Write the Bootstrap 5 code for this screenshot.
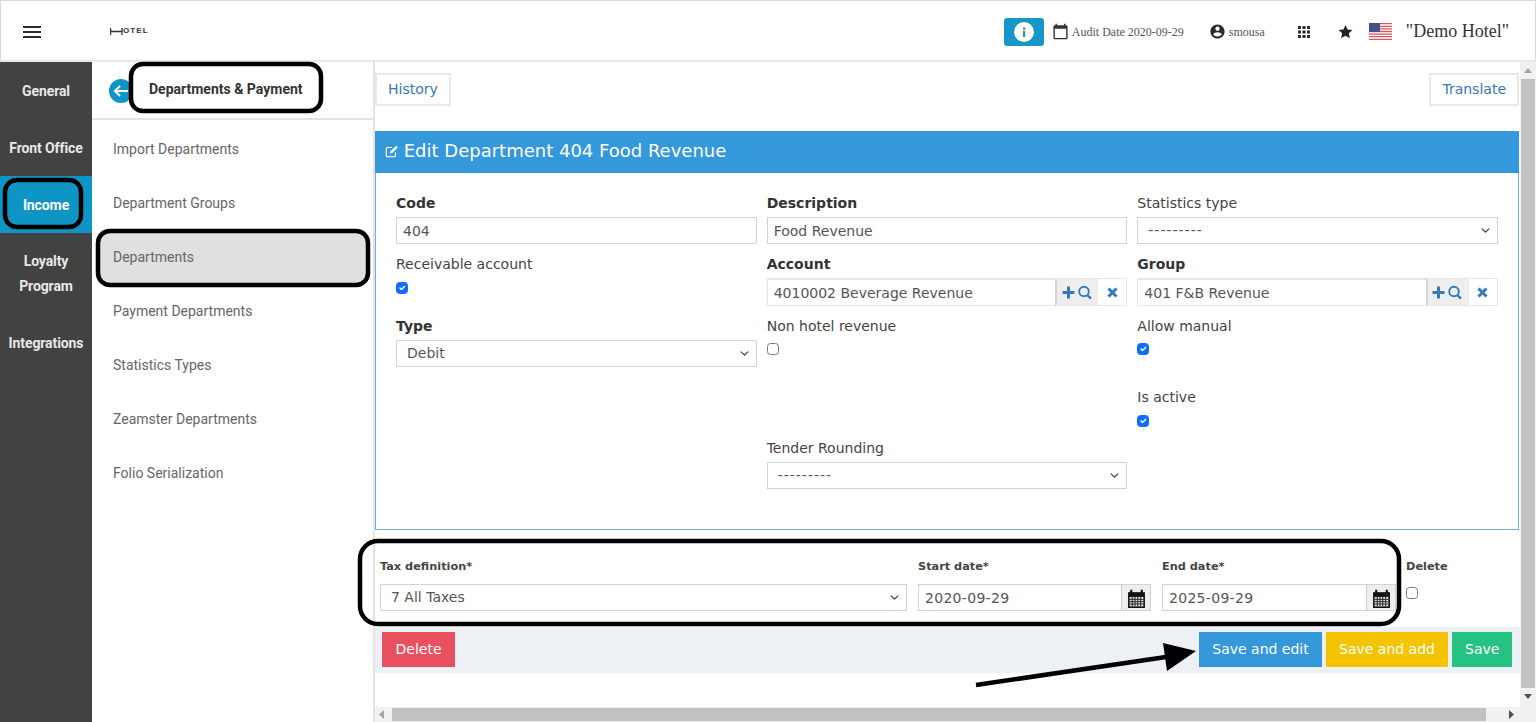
<!DOCTYPE html>
<html lang="en">
<head>
    <meta charset="UTF-8">
    <meta name="viewport" content="width=device-width, initial-scale=1.0">
    <title>Edit Department</title>
    <link href="https://cdn.jsdelivr.net/npm/bootstrap@5.3.3/dist/css/bootstrap.min.css" rel="stylesheet">
    <style>
        html, body { height: 722px; overflow: hidden; }
        body { background: #fff; font-family: "DejaVu Sans", sans-serif; font-size: 14px; color: #333; position: relative; }

        /* top bar */
        .top-bar { height: 62px; border: 1px solid #d8d8d8; border-bottom: 2px solid #e8e8e8; padding: 2px 0 0 22px; background: #fff; }
        .burger { width: 18px; display: block; border: 0; padding: 0; background: none; }
        .burger span { display: block; height: 2px; background: #2b2b2b; margin-bottom: 3px; }
        .hotel-logo { margin-left: 69px; font-family: "Liberation Sans", sans-serif; font-weight: 700; font-size: 8px; letter-spacing: 1.100px; color: #333; line-height: 8px; margin-top: -1px; }
        .info-btn { width: 40px; height: 28px; background: #1598c9; border-radius: 3px; border: 0; padding: 0; }
        .top-text { font-family: "Liberation Serif", serif; font-size: 12px; color: #555; }
        .hotel-name { font-family: "Liberation Serif", serif; font-size: 18px; color: #333; }
        .top-icons { margin-left: auto; padding-right: 26px; }

        /* rail */
        .page-body { height: 660px; }
        .rail { width: 92px; background: #424242; flex: none; }
        .rail-item { display: block; padding: 17px 4px 15px; line-height: 25px; text-align: center; color: #e8e8e8; font-family: Roboto, sans-serif; font-weight: 700; font-size: 14px; text-decoration: none; letter-spacing: -.1px; }
        .rail-item.on { background: #0f94c6; color: #fff; }
        .rail-item.two-line { padding: 16px 4px 15px; }

        /* sub menu */
        .sub-menu { width: 283px; flex: none; border-right: 2px solid #e4e4e4; font-family: Roboto, sans-serif; }
        .sub-head { height: 58px; border-bottom: 2px solid #e4e4e4; padding: 2px 0 0 17px; }
        .back-dot { width: 24px; height: 24px; border-radius: 50%; background: #0f94c6; flex: none; }
        .sub-title { margin-left: 16px; font-weight: 700; font-size: 14px; color: #333; margin-top: -3px; }
        .sub-list { padding: 2px 4px 0 5px; }
        .sub-link { display: block; height: 54px; line-height: 54px; padding-left: 16px; color: #666; font-size: 14px; text-decoration: none; }
        .sub-link.on { background: #e0e0e0; border-radius: 8px; }

        /* main */
        .main-wrap { width: 1145px; flex: none; }
        .main-view { height: 645px; overflow: hidden; }
        .top-tools { padding: 11px 1px 25px 0; }
        .plain-btn { height: 33px; padding: 0 11px; font-size: 14px; color: #337ab7; background: #fff; border: 2px solid #e9e9e9; border-radius: 0; line-height: 29px; }
        .dept-card { margin-right: 1px; border: 0; border-left: 1px solid #6fb0e2; border-right: 1px solid #6fb0e2; border-bottom: 1px solid #6fb0e2; border-radius: 0; height: 399px; }
        .dept-head { background: #3498db; color: #fff; height: 42px; font-size: 18px; line-height: 40px; padding-left: 10px; margin: 0 -1px; }
        .head-icon { margin: -2px -1px 0 0; }
        .dept-form { padding: 20px 20px 0 20px; }
        .dept-row { --bs-gutter-x: 10px; }
        .fld-label { display: block; height: 20px; line-height: 20px; margin-bottom: 4px; color: #444; font-size: 14px; }
        .fld-label.req { font-weight: 700; color: #333; }
        .form-control, .form-select { height: 27px; min-height: 0; border-radius: 0; border: 1px solid #ccd3e0; font-size: 14px; color: #555; padding: 0 6px; box-shadow: none; }
        .form-select { padding-left: 10px; background-position: right 6px center; background-size: 11px 9px; }
        .dash-select { letter-spacing: 1px; }
        .date-input { letter-spacing: .3px; }
        .r1 { height: 61px; }
        .r2 { height: 62px; }
        .r3 { height: 71px; }
        .r4 { height: 51px; }
        .form-check-input { width: 12px; height: 12px; margin: 0; border-radius: 3px; display: block; border-color: #777; }
        .form-check-input:checked { background-color: #0d6efd; border-color: #0d6efd; }
        .chk-box { padding-top: 4px; }
        .r3 .chk-box { padding-top: 3px; }
        .pick-group { height: 28px; flex-wrap: nowrap; }
        .pick-group .form-control { height: 28px; border-right: 0; border-top-width: 2px; border-color: #e4e8ee; }
        .pick-btn { height: 28px; background: #eee; border: 1px solid #e4e8ee; border-left: 2px solid #d6d6d6; border-radius: 0; width: 44px; padding: 0; flex: none; }
        .clear-btn { height: 28px; width: 29px; padding: 0; background: #fff; border: 1px solid #e4e8ee; border-left: 0; border-radius: 0; flex: none; }

        /* tax row */
        .tax-row { padding: 28px 0 0 5px; gap: 11px; height: 97px; }
        .tax-main { width: 527px; }
        .tax-date { width: 233px; }
        .tax-end { width: 234px; margin-right: -1px; }
        .tax-label { display: block; height: 18px; line-height: 18px; font-size: 11.3px; font-weight: 700; color: #444; margin-bottom: 8px; }
        .cal-group { flex-wrap: nowrap; height: 27px; }
        .cal-btn { width: 30px; height: 27px; background: #eee; border: 1px solid #ccd3e0; border-left: 1px solid #ccc; border-radius: 0; flex: none; padding: 0; }
        .tax-del .form-check-input { margin-top: 11px; }

        /* actions */
        .act-bar { height: 46px; background: #edf0f5; padding: 5px 8px 0 7px; }
        .act-btn { height: 35px; border: 0; border-radius: 0; color: #fff; font-size: 14px; padding: 0 13px; line-height: 33px; }
        .act-red { background: #ea5160; width: 73px; }
        .act-blue { background: #3498db; width: 123px; }
        .act-yellow { background: #f5c400; width: 122px; }
        .act-green { background: #26c281; width: 60px; }

        /* fake scrollbars */
        .h-scroll { height: 15px; background: #f1f1f1; padding: 1px 34px 1px 17px; position: relative; }
        .h-thumb { height: 13px; background: #c1c1c1; }
        .arr-left { position: absolute; left: 4px; top: 3px; }
        .arr-right { position: absolute; right: 6px; top: 3px; }
        .v-scroll { width: 16px; height: 660px; flex: none; background: #f1f1f1; padding: 17px 1px 0; position: relative; }
        .v-thumb { height: 609px; background: #c1c1c1; }
        .arr-up { position: absolute; left: 4px; top: 6px; }
        .arr-down { position: absolute; left: 4px; top: 632px; }

        .notes { position: absolute; left: 0; top: 0; pointer-events: none; }
    </style>
</head>

<body>
    <!-- top bar -->
    <header class="top-bar d-flex align-items-center">
        <button class="burger" type="button" aria-label="menu"><span></span><span></span><span style="margin:0"></span></button>
        <div class="hotel-logo d-flex align-items-center">
            <svg width="13" height="7" viewBox="0 0 13 7"><path d="M.6 0v7M12 0v7M.6 3.500H12" stroke="#333" stroke-width="1.300" fill="none"/></svg><span>OTEL</span>
        </div>
        <div class="top-icons d-flex align-items-center">
            <button class="info-btn d-flex align-items-center justify-content-center" type="button" aria-label="info">
                <svg width="20" height="20" viewBox="0 0 20 20"><circle cx="10" cy="10" r="10" fill="#fff"/><rect x="9" y="9" width="2.200" height="6" fill="#1598c9"/><rect x="9" y="5.500" width="2.200" height="2.200" fill="#1598c9"/></svg>
            </button>
            <svg style="margin-left:8px" width="17" height="17" viewBox="0 0 24 24" fill="#333"><path d="M20 3h-1V1h-2v2H7V1H5v2H4c-1.100 0-2 .9-2 2v16c0 1.100.9 2 2 2h16c1.100 0 2-.9 2-2V5c0-1.100-.9-2-2-2zm0 18H4V8h16v13z"/></svg>
            <span class="top-text" style="margin-left:3px">Audit Date 2020-09-29</span>
            <svg style="margin-left:25px" width="17" height="17" viewBox="0 0 24 24" fill="#2b2b2b"><path d="M12 2C6.480 2 2 6.480 2 12s4.480 10 10 10 10-4.480 10-10S17.520 2 12 2zm0 3c1.660 0 3 1.340 3 3s-1.340 3-3 3-3-1.340-3-3 1.340-3 3-3zm0 14.200c-2.500 0-4.710-1.280-6-3.220.03-1.990 4-3.080 6-3.080 1.990 0 5.970 1.090 6 3.080-1.290 1.940-3.500 3.220-6 3.220z"/></svg>
            <span class="top-text" style="margin-left:3px">smousa</span>
            <svg style="margin-left:33px" width="12" height="12" viewBox="0 0 12 12" fill="#2b2b2b"><rect width="3" height="3"/><rect x="4.500" width="3" height="3"/><rect x="9" width="3" height="3"/><rect y="4.500" width="3" height="3"/><rect x="4.500" y="4.500" width="3" height="3"/><rect x="9" y="4.500" width="3" height="3"/><rect y="9" width="3" height="3"/><rect x="4.500" y="9" width="3" height="3"/><rect x="9" y="9" width="3" height="3"/></svg>
            <svg style="margin-left:28px" width="15" height="15" viewBox="0 0 24 24" fill="#222"><path d="M12 1.500l3.300 7.200 7.900.9-5.900 5.300 1.700 7.800-7-4-7 4 1.700-7.800L.8 9.600l7.900-.9z"/></svg>
            <svg style="margin-left:16px" width="23" height="17" viewBox="0 0 23 17">
                <rect width="23" height="17" fill="#fff"/>
                <path d="M0 .7h23M0 3.300h23M0 5.900h23M0 8.500h23M0 11.100h23M0 13.700h23M0 16.300h23" stroke="#d4545f" stroke-width="1.300"/>
                <rect width="11" height="9" fill="#44508c"/>
            </svg>
            <span class="hotel-name" style="margin-left:14px">"Demo Hotel"</span>
        </div>
    </header>

    <div class="page-body d-flex">
        <!-- rail -->
        <nav class="rail">
            <a class="rail-item" href="#">General</a>
            <a class="rail-item" href="#">Front Office</a>
            <a class="rail-item on" href="#">Income</a>
            <a class="rail-item two-line" href="#">Loyalty Program</a>
            <a class="rail-item" href="#">Integrations</a>
        </nav>

        <!-- sub menu -->
        <aside class="sub-menu">
            <div class="sub-head d-flex align-items-center">
                <span class="back-dot d-flex align-items-center justify-content-center">
                    <svg width="16" height="14" viewBox="0 0 16 14"><path d="M15 7H2M7 2L2 7l5 5" stroke="#fff" stroke-width="2" fill="none"/></svg>
                </span>
                <span class="sub-title">Departments &amp; Payment</span>
            </div>
            <div class="sub-list">
                <a class="sub-link" href="#">Import Departments</a>
                <a class="sub-link" href="#">Department Groups</a>
                <a class="sub-link on" href="#">Departments</a>
                <a class="sub-link" href="#">Payment Departments</a>
                <a class="sub-link" href="#">Statistics Types</a>
                <a class="sub-link" href="#">Zeamster Departments</a>
                <a class="sub-link" href="#">Folio Serialization</a>
            </div>
        </aside>

        <!-- main -->
        <div class="main-wrap">
            <div class="main-view">
                <div class="top-tools d-flex justify-content-between">
                    <button class="btn plain-btn" type="button">History</button>
                    <button class="btn plain-btn" type="button">Translate</button>
                </div>

                <div class="card dept-card">
                    <div class="dept-head">
                        <svg class="head-icon" width="14" height="14" viewBox="0 0 14 14" fill="none"><path d="M10.500 8.500V11.500a1.200 1.200 0 0 1-1.200 1.200H2.500a1.200 1.200 0 0 1-1.200-1.200V4.700a1.200 1.200 0 0 1 1.200-1.200H7" stroke="#fff" stroke-width="1.200"/><path d="M5.500 7.200L11 1.700l1.800 1.800-5.500 5.500-2.200.4z" fill="#fff"/></svg>
                        Edit Department 404 Food Revenue
                    </div>
                    <div class="dept-form">
                        <div class="row dept-row r1">
                            <div class="col-4">
                                <label class="fld-label req">Code</label>
                                <input class="form-control" value="404">
                            </div>
                            <div class="col-4">
                                <label class="fld-label req">Description</label>
                                <input class="form-control" value="Food Revenue">
                            </div>
                            <div class="col-4">
                                <label class="fld-label">Statistics type</label>
                                <select class="form-select dash-select"><option>---------</option></select>
                            </div>
                        </div>
                        <div class="row dept-row r2">
                            <div class="col-4">
                                <label class="fld-label">Receivable account</label>
                                <div class="chk-box"><input class="form-check-input" type="checkbox" checked></div>
                            </div>
                            <div class="col-4">
                                <label class="fld-label req">Account</label>
                                <div class="input-group pick-group">
                                    <input class="form-control" value="4010002 Beverage Revenue">
                                    <button class="btn pick-btn" type="button" aria-label="add or search">
                                        <svg width="32" height="15" viewBox="0 0 32 15"><path d="M.5 7.500h12M6.500 1.500v12" stroke="#337ab7" stroke-width="3"/><circle cx="22" cy="6.500" r="4.800" stroke="#337ab7" stroke-width="1.900" fill="none"/><path d="M25.300 10l3.700 3.700" stroke="#337ab7" stroke-width="2.400"/></svg>
                                    </button>
                                    <button class="btn clear-btn" type="button" aria-label="clear">
                                        <svg width="11" height="11" viewBox="0 0 11 11"><path d="M1.500 1.500l8 8M9.500 1.500l-8 8" stroke="#337ab7" stroke-width="3"/></svg>
                                    </button>
                                </div>
                            </div>
                            <div class="col-4">
                                <label class="fld-label req">Group</label>
                                <div class="input-group pick-group">
                                    <input class="form-control" value="401 F&amp;B Revenue">
                                    <button class="btn pick-btn" type="button" aria-label="add or search">
                                        <svg width="32" height="15" viewBox="0 0 32 15"><path d="M.5 7.500h12M6.500 1.500v12" stroke="#337ab7" stroke-width="3"/><circle cx="22" cy="6.500" r="4.800" stroke="#337ab7" stroke-width="1.900" fill="none"/><path d="M25.300 10l3.700 3.700" stroke="#337ab7" stroke-width="2.400"/></svg>
                                    </button>
                                    <button class="btn clear-btn" type="button" aria-label="clear">
                                        <svg width="11" height="11" viewBox="0 0 11 11"><path d="M1.500 1.500l8 8M9.500 1.500l-8 8" stroke="#337ab7" stroke-width="3"/></svg>
                                    </button>
                                </div>
                            </div>
                        </div>
                        <div class="row dept-row r3">
                            <div class="col-4">
                                <label class="fld-label req">Type</label>
                                <select class="form-select"><option>Debit</option></select>
                            </div>
                            <div class="col-4">
                                <label class="fld-label">Non hotel revenue</label>
                                <div class="chk-box"><input class="form-check-input" type="checkbox"></div>
                            </div>
                            <div class="col-4">
                                <label class="fld-label">Allow manual</label>
                                <div class="chk-box"><input class="form-check-input" type="checkbox" checked></div>
                            </div>
                        </div>
                        <div class="row dept-row r4">
                            <div class="col-4 offset-8">
                                <label class="fld-label">Is active</label>
                                <div class="chk-box"><input class="form-check-input" type="checkbox" checked></div>
                            </div>
                        </div>
                        <div class="row dept-row">
                            <div class="col-4 offset-4">
                                <label class="fld-label">Tender Rounding</label>
                                <select class="form-select dash-select"><option>---------</option></select>
                            </div>
                        </div>
                    </div>
                </div>

                <div class="tax-row d-flex">
                    <div class="tax-main">
                        <label class="tax-label">Tax definition*</label>
                        <select class="form-select"><option>7 All Taxes</option></select>
                    </div>
                    <div class="tax-date">
                        <label class="tax-label">Start date*</label>
                        <div class="input-group cal-group">
                            <input class="form-control date-input" value="2020-09-29">
                            <button class="btn cal-btn" type="button" aria-label="calendar">
                                <svg width="19" height="19" viewBox="0 0 18 18"><path d="M1 3h16v15H1z" fill="#111"/><path d="M4 .8v3M14 .8v3" stroke="#111" stroke-width="2"/><path d="M2.500 7.500h13v9h-13z" fill="#ddd"/><path d="M2.500 9.800h13M2.500 12h13M2.500 14.200h13M5 7.500v9M7.600 7.500v9M10.200 7.500v9M12.900 7.500v9" stroke="#222" stroke-width=".9"/></svg>
                            </button>
                        </div>
                    </div>
                    <div class="tax-end">
                        <label class="tax-label">End date*</label>
                        <div class="input-group cal-group">
                            <input class="form-control date-input" value="2025-09-29">
                            <button class="btn cal-btn" type="button" aria-label="calendar">
                                <svg width="19" height="19" viewBox="0 0 18 18"><path d="M1 3h16v15H1z" fill="#111"/><path d="M4 .8v3M14 .8v3" stroke="#111" stroke-width="2"/><path d="M2.500 7.500h13v9h-13z" fill="#ddd"/><path d="M2.500 9.800h13M2.500 12h13M2.500 14.200h13M5 7.500v9M7.600 7.500v9M10.200 7.500v9M12.900 7.500v9" stroke="#222" stroke-width=".9"/></svg>
                            </button>
                        </div>
                    </div>
                    <div class="tax-del">
                        <label class="tax-label">Delete</label>
                        <input class="form-check-input" type="checkbox">
                    </div>
                </div>

                <div class="act-bar d-flex">
                    <button class="btn act-btn act-red" type="button">Delete</button>
                    <div class="ms-auto d-flex gap-1">
                        <button class="btn act-btn act-blue" type="button">Save and edit</button>
                        <button class="btn act-btn act-yellow" type="button">Save and add</button>
                        <button class="btn act-btn act-green" type="button">Save</button>
                    </div>
                </div>
            </div>
            <div class="h-scroll">
                <svg class="arr-left" width="5" height="9" viewBox="0 0 5 9"><path d="M5 0v9L0 4.500z" fill="#a3a3a3"/></svg>
                <div class="h-thumb"></div>
                <svg class="arr-right" width="5" height="9" viewBox="0 0 5 9"><path d="M0 0v9l5-4.500z" fill="#505050"/></svg>
            </div>
        </div>

        <div class="v-scroll">
            <svg class="arr-up" width="8" height="5" viewBox="0 0 8 5"><path d="M0 5h8L4 0z" fill="#a3a3a3"/></svg>
            <div class="v-thumb"></div>
            <svg class="arr-down" width="8" height="5" viewBox="0 0 8 5"><path d="M0 0h8L4 5z" fill="#505050"/></svg>
        </div>
    </div>

    <!-- hand-drawn callouts on the screenshot -->
    <svg class="notes" width="1536" height="722" viewBox="0 0 1536 722" fill="none">
        <rect x="131" y="64" width="190" height="47" rx="12" stroke="#000" stroke-width="4.500"/>
        <rect x="5" y="180" width="76" height="47" rx="12" stroke="#000" stroke-width="4.500"/>
        <rect x="98" y="231" width="270" height="54" rx="12" stroke="#000" stroke-width="4.500"/>
        <rect x="360" y="541" width="1039" height="83" rx="18" stroke="#000" stroke-width="4.500"/>
        <path d="M976 685L1166 657" stroke="#000" stroke-width="4.500"/>
        <path d="M1196 651L1163 643L1167 671z" fill="#000"/>
    </svg>
</body>

</html>
